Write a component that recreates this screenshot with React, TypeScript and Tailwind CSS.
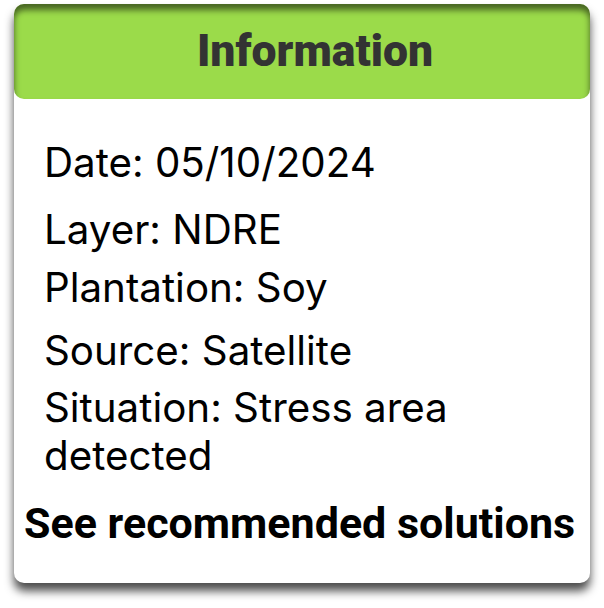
import React from 'react';

const rows = [
  { text: 'Date: 05/10/2024', mt: 'mt-0' },
  { text: 'Layer: NDRE', mt: 'mt-[19px]' },
  { text: 'Plantation: Soy', mt: 'mt-[10px]' },
  { text: 'Source: Satellite', mt: 'mt-[15px]' },
  { text: 'Situation: Stress area detected', mt: 'mt-[9px]' },
];

const App: React.FC = () => {
  return (
    <div className="w-[604px] h-[608px] bg-white pl-[14px] pt-[4px]">
      <div className="w-[576px] h-[579px] bg-white rounded-[10px] shadow-[0_8px_10px_rgba(0,0,0,0.7)] flex flex-col">
        <div className="h-[95px] shrink-0 bg-[#9bdb4a] rounded-[10px] shadow-[inset_0_6px_6px_rgba(0,0,0,0.55)] flex items-center justify-center">
          <h1 className="text-[44.5px] font-black text-[#333333] font-['Roboto',sans-serif] pl-[26px]">
            Information
          </h1>
        </div>
        <div className="px-[30px] pt-[40px] font-['Inter',sans-serif] text-[40.3px] leading-[48px] text-black">
          {rows.map((r) => (
            <p key={r.text} className={r.mt}>
              {r.text}
            </p>
          ))}
        </div>
        <div className="pl-[10px] mt-[19px] font-['Roboto',sans-serif] font-bold text-[43px] leading-[48px] text-black">
          See recommended solutions
        </div>
      </div>
    </div>
  );
};

export default App;
